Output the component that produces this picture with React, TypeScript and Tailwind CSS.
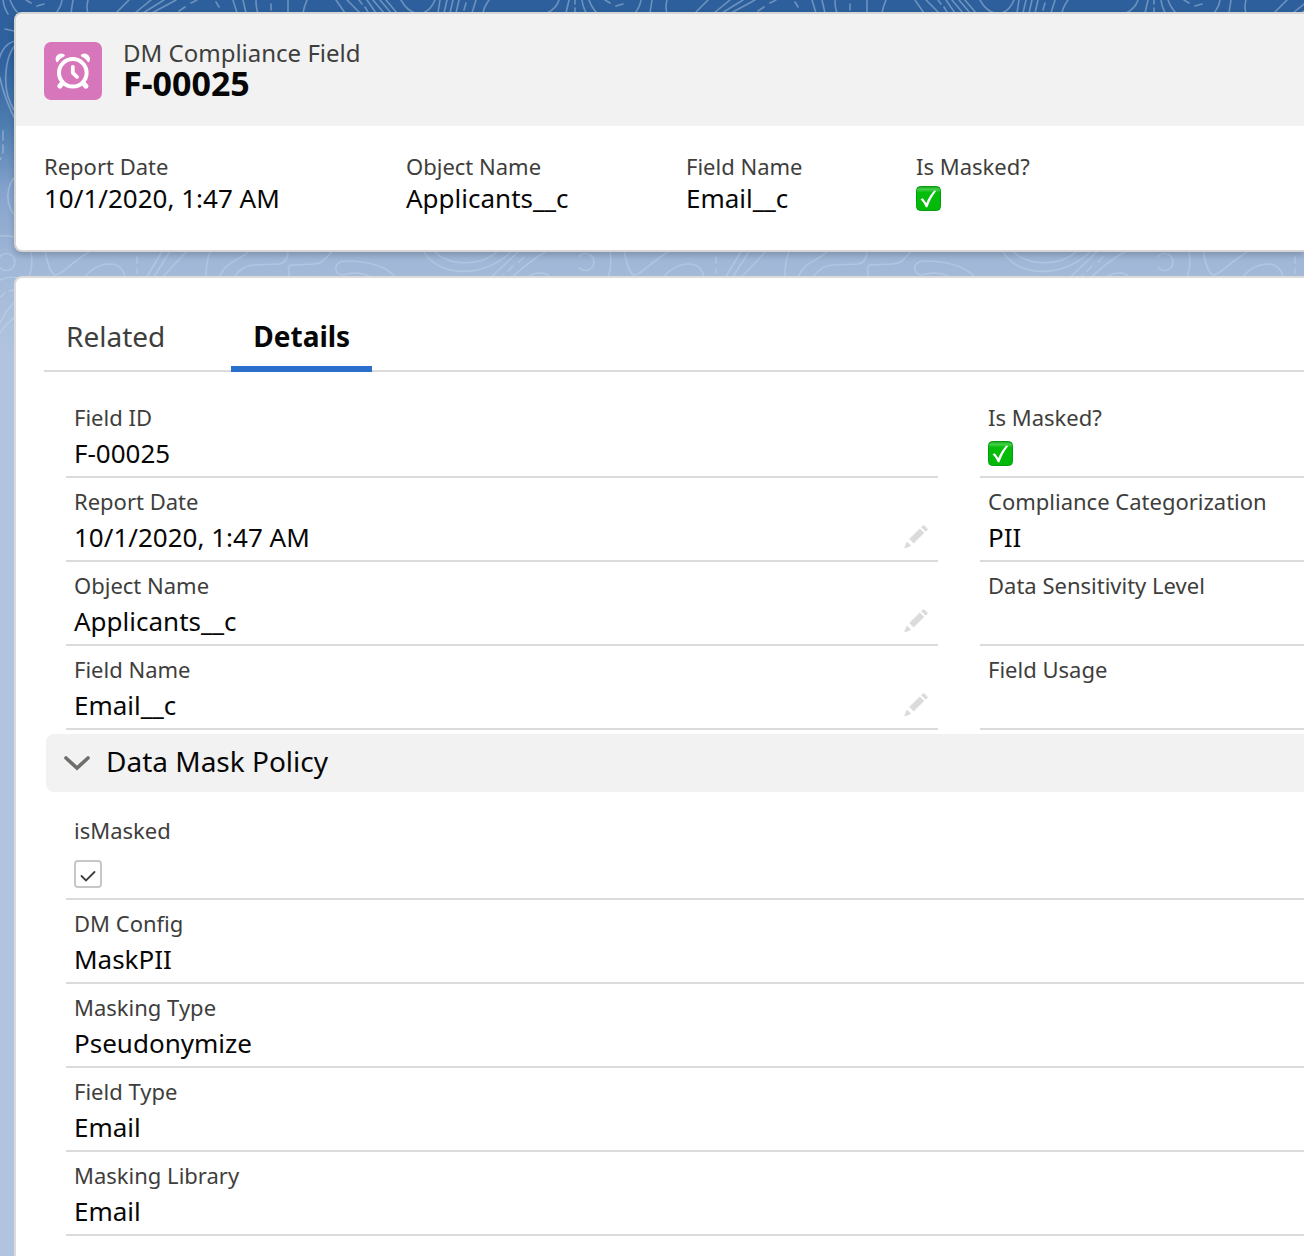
import { useState, type ReactNode } from "react";

const WAVES = [
  // upper band
  "M3 0Q4 8 8 14M10 0Q13 8 18 13M26 0L31 3M37 6L44 4M62 0Q61 7 56 13M73 0L71 13M88 0Q86 7 88 13M129 0L116 13M151 0L135 13M164 0L143 13M176 0L152 13M185 7L179 11M197 0L191 3M216 2L219 7M233 0L237 13M243 0L246 13M256 0Q256 8 258 13M271 4V10M288 0V13",
  "M307 0Q304 7 303 13M336 0L345 13M347 0L360 13M359 0L362 4M365 7L368 12M367 0L376 13M373 0L384 13M380 0L391 13M386 0L397 13M401 0Q407 11 416 13M435 0Q431 10 423 13M440 0L438 13M447 0L444 13M453 0L450 13M459 0L456 13M466 3L464 10M476 0L472 13M489 0Q484 7 483 13M559 0Q556 9 547 13M569 0L566 13M575 0V4M575 8V12",
  // left edge
  "M5 29L14 31M20 40C-3 42 -4 70 0 78C4 96 9 108 16 121M18 42C4 55 1 90 14 110M3 131V140M3 145V153M0 160L1 158M18 175C5 182 4 210 18 217M0 236Q8 235 18 238",
  // middle band
  "M31 250Q34 272 26 282C18 276 8 276 0 280M45 250C47 262 51 275 56 275S72 262 92 250M80 283C90 268 100 264 110 264S125 272 126 283M137 257V263M137 269V273M163 250L143 283M171 250L150 283M188 250L157 283M211 250Q205 262 206 283M218 283C222 260 240 262 250 250M231 283C238 268 247 265 255 265L279 264Q288 263 288 250M289 283V272Q287 264 294 265L314 264C324 264 326 256 334 250M400 283C392 269 375 261 345 261C333 261 333 275 343 275C352 272 365 272 374 279",
  "M423 250C436 277 484 280 513 250M433 250C448 267 482 267 499 250M520 250L485 283M524 257L519 262M513 266L508 271M504 275L501 279M550 250Q532 258 506 283M523 283C530 273 536 273 543 273Q550 274 553 283",
  "M0 297L5 293M9 291L14 290M0 323Q7 308 18 299M0 333Q7 322 18 315",
];

function Backdrop() {
  return (
    <svg aria-hidden="true" className="absolute inset-x-0 top-0 h-[370px] w-full">
      <defs>
        <pattern id="contours" width="579" height="370" patternUnits="userSpaceOnUse">
          <g fill="none" stroke="#c5d9ef" strokeWidth="1.6" strokeLinecap="round" opacity="0.42">
            {WAVES.map((d) => (
              <path key={d} d={d} />
            ))}
            <circle cx="6.5" cy="262" r="8.5" />
          </g>
        </pattern>
      </defs>
      <rect width="100%" height="370" fill="url(#contours)" />
    </svg>
  );
}

function AlarmIcon() {
  return (
    <svg viewBox="0 0 58 58" className="size-[58px] shrink-0 rounded-[7px] bg-[#d876bb]" aria-hidden="true">
      <g fill="none" stroke="#fff" strokeLinecap="round" strokeLinejoin="round">
        <circle cx="28.8" cy="30.8" r="13.8" strokeWidth="4" />
        <path d="M28.8 24.8V30.8L33 35" strokeWidth="3.8" />
        <path d="M18.5 41L15.8 44.2M39 41L42 44.2" strokeWidth="5" />
      </g>
      <path d="M12.3 19.8C9.5 14 16 9.5 20.2 12.6C21.2 13.4 20.8 14.3 19.8 14.8C17.2 16.1 15.5 17.4 14.2 19.4C13.6 20.3 12.8 20.6 12.3 19.8ZM45.3 19.8C48.1 14 41.6 9.5 37.4 12.6C36.4 13.4 36.8 14.3 37.8 14.8C40.4 16.1 42.1 17.4 43.4 19.4C44 20.3 44.8 20.6 45.3 19.8Z" fill="#fff" />
    </svg>
  );
}

function GreenCheck() {
  return (
    <svg viewBox="0 0 25 25" className="size-[25px]" role="img" aria-label="Yes">
      <defs>
        <linearGradient id="green" x1="0" y1="0" x2="0" y2="1">
          <stop offset="0" stopColor="#17a51c" />
          <stop offset="0.12" stopColor="#43cf48" />
          <stop offset="0.25" stopColor="#06bd0a" />
          <stop offset="1" stopColor="#00b906" />
        </linearGradient>
      </defs>
      <rect x="0.5" y="0.5" width="24" height="24" rx="4" fill="url(#green)" stroke="#079b12" />
      <path d="M4.5 13.2L6.8 12.2L10.3 16.9C12.5 12 15.2 7.6 18.4 4.6L20.2 5C16.6 9.3 13.8 14.5 11.4 21.2H9.8C8.5 18 6.7 15.3 4.5 13.2Z" fill="#fff" />
    </svg>
  );
}

function PencilIcon() {
  return (
    <svg viewBox="0 0 24 24" className="size-6" fill="#dddbda" stroke="#dddbda" strokeWidth="0.8" strokeLinejoin="round" aria-hidden="true">
      <path d="M5.6 13.9L15.8 3.9L19.8 7.9L9.6 18ZM17.6 2.2L19 0.8Q19.8 0.4 20.5 1L23 3.5Q23.6 4.3 23 5L21.6 6.2ZM3 17L6.7 20.7L1.2 22.9Q0.6 22.8 0.9 22.2Z" />
    </svg>
  );
}

const labelStyle = "text-[22px] leading-8 text-[#3e3e3c]";
const valueStyle = "text-[26px] leading-8 text-[#080707]";

function Highlight({ label, children }: { label: string; children: ReactNode }) {
  return (
    <div>
      <dt className={labelStyle}>{label}</dt>
      <dd className={`${valueStyle} flex h-8 items-center whitespace-nowrap`}>{children}</dd>
    </div>
  );
}

function Field({ label, children, editable = false }: { label: string; children?: ReactNode; editable?: boolean }) {
  return (
    <div className="border-b-2 border-[#dddbda] px-2 py-[7px]">
      <dt className={`${labelStyle} whitespace-nowrap`}>{label}</dt>
      <dd className={`${valueStyle} mt-1 flex h-8 items-center justify-between`}>
        {children}
        {editable && (
          <button type="button" aria-label={`Edit ${label}`} className="mr-[2px]">
            <PencilIcon />
          </button>
        )}
      </dd>
    </div>
  );
}

export default function App() {
  const [open, setOpen] = useState(true);
  return (
    <div className="relative min-h-screen overflow-hidden bg-[#b0c4df] bg-[linear-gradient(#2c5f9b_0px,#2f629e_60px,#4d7db0_125px,#84a2cc_190px,#a0b7d7_260px,#b0c4df_350px)] pt-3 pl-[14px] font-['Noto_Sans',sans-serif] text-[#080707]">
      <Backdrop />
      <main className="relative flex min-h-[1300px] flex-col gap-6">
        <header className="overflow-hidden rounded-l-lg border-2 border-r-0 border-[#d5d5d6] bg-white shadow-[0_3px_6px_rgba(0,0,0,0.2)]">
          <div className="flex gap-[21px] bg-[#f2f2f2] px-7 pt-6 pb-[26px]">
            <div className="pt-1">
              <AlarmIcon />
            </div>
            <h1>
              <span className="block text-[24px] leading-[30px] text-[#3e3e3c]">DM Compliance Field</span>
              <span className="block text-[34px] leading-[30px] font-bold">F-00025</span>
            </h1>
          </div>
          <dl className="grid grid-cols-[362px_280px_230px_1fr] px-7 pt-6 pb-9">
            <Highlight label="Report Date">10/1/2020, 1:47 AM</Highlight>
            <Highlight label="Object Name">Applicants__c</Highlight>
            <Highlight label="Field Name">Email__c</Highlight>
            <Highlight label="Is Masked?">
              <GreenCheck />
            </Highlight>
          </dl>
        </header>

        <section className="grow rounded-tl-lg border-2 border-r-0 border-[#dddbda] bg-white pt-7 pl-7">
          <div role="tablist" className="flex items-start gap-11 border-b-2 border-[#dddbda] text-[28px] leading-[60px]">
            <button type="button" role="tab" aria-selected="false" className="px-[22px] text-[#3e3e3c]">
              Related
            </button>
            <button type="button" role="tab" aria-selected="true" className="-mb-[2px] border-b-6 border-[#2a6fcb] px-[22px] font-bold">
              Details
            </button>
          </div>

          <div className="pt-[22px] pl-[22px]">
            <dl className="grid grid-cols-[872fr_324fr] gap-x-[42px]">
              <Field label="Field ID">F-00025</Field>
              <Field label="Is Masked?">
                <GreenCheck />
              </Field>
              <Field label="Report Date" editable>10/1/2020, 1:47 AM</Field>
              <Field label="Compliance Categorization">PII</Field>
              <Field label="Object Name" editable>Applicants__c</Field>
              <Field label="Data Sensitivity Level" />
              <Field label="Field Name" editable>Email__c</Field>
              <Field label="Field Usage" />
            </dl>
          </div>

          <h2 className="mt-1 ml-[2px] rounded-l-lg bg-[#f2f2f2] text-[28px] leading-[54px]">
            <button type="button" aria-expanded={open} onClick={() => setOpen(!open)} className="flex w-full items-center gap-4 pl-[18px]">
              <svg viewBox="0 0 26 16" className={open ? "h-4 w-[26px]" : "h-4 w-[26px] -rotate-90"} aria-hidden="true">
                <path d="M2 3L13 13L24 3" fill="none" stroke="#706e6b" strokeWidth="3.6" strokeLinecap="round" />
              </svg>
              <span className="pb-1">Data Mask Policy</span>
            </button>
          </h2>

          {open && (
            <div className="pt-[22px] pl-[22px]">
              <div className="border-b-2 border-[#dddbda] px-2 pb-[10px]">
                <label htmlFor="is-masked" className={`${labelStyle} block`}>isMasked</label>
                <div className="relative mt-[14px] size-7">
                  <input id="is-masked" type="checkbox" defaultChecked className="peer block size-7 appearance-none rounded-[4px] border-2 border-[#c9c7c5] bg-white" />
                  <svg viewBox="0 0 28 28" className="pointer-events-none absolute inset-0 hidden size-7 peer-checked:block" aria-hidden="true">
                    <path d="M7.5 16L12 20.5L20.5 12" fill="none" stroke="#3e3e3c" strokeWidth="1.8" strokeLinecap="round" />
                  </svg>
                </div>
              </div>
              <dl>
                <Field label="DM Config">MaskPII</Field>
                <Field label="Masking Type">Pseudonymize</Field>
                <Field label="Field Type">Email</Field>
                <Field label="Masking Library">Email</Field>
              </dl>
            </div>
          )}
        </section>
      </main>
    </div>
  );
}
